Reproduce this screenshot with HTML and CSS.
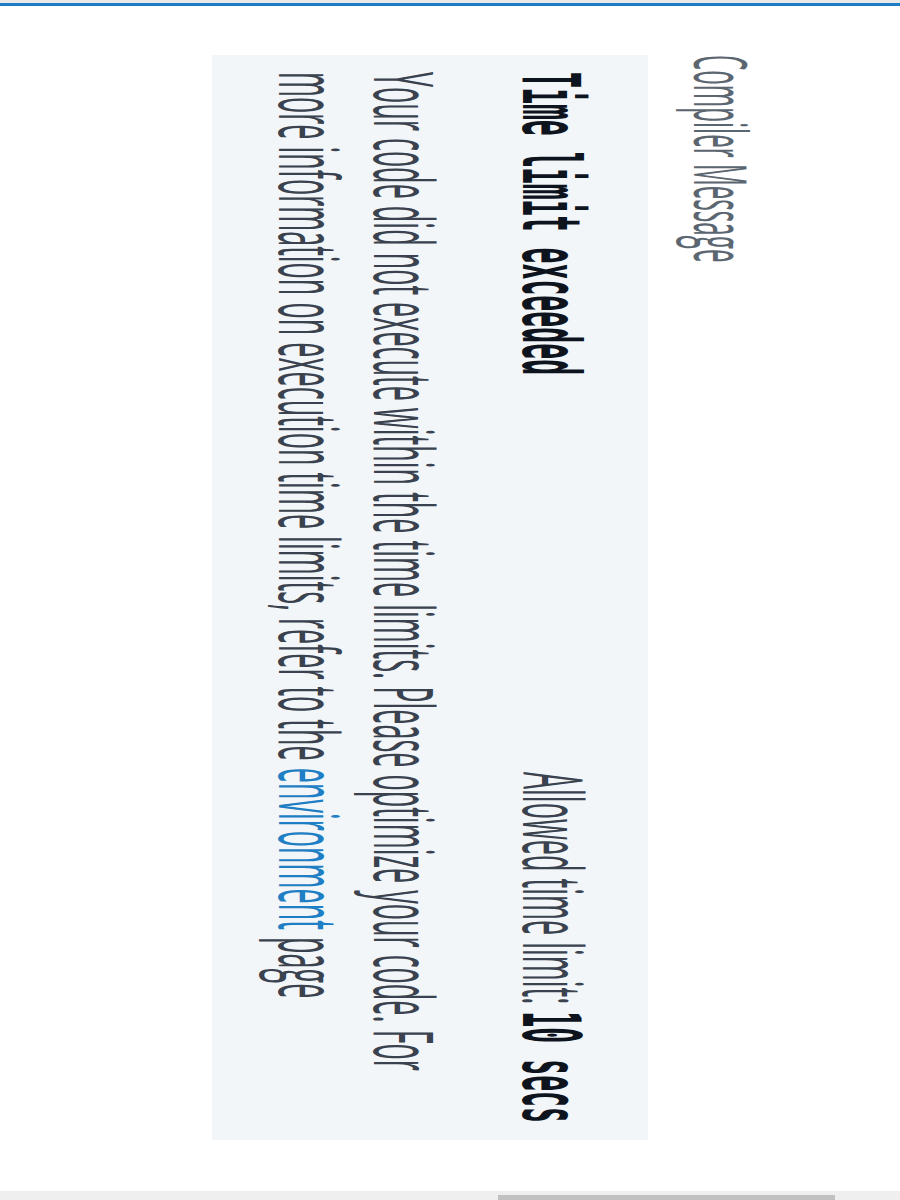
FILE: index.html
```html
<!DOCTYPE html>
<html lang="en">
<head>
<meta charset="utf-8">
<title>Compiler Message</title>
<link rel="stylesheet" href="styles.css">
</head>
<body>
<div class="topbar"></div>
<main class="stage">
  <section class="rot">
    <h2 class="title">Compiler Message</h2>
    <div class="panel">
      <div class="status-row">
        <span class="mono">Time limit exceeded</span>
        <span class="limit">Allowed time limit: <span class="mono">10 secs</span></span>
      </div>
      <p class="msg">Your code did not execute within the time limits. Please optimize your code. For more information on execution time limits, refer to the <a href="#">environment</a> page</p>
    </div>
  </section>
</main>
<div class="hbar"><div class="thumb"></div></div>
</body>
</html>
```
FILE: styles.css
```css
html, body {
  margin: 0;
  padding: 0;
  background: #ffffff;
}
body {
  width: 900px;
  height: 1200px;
  overflow: hidden;
}
.topbar {
  height: 3px;
  background: #e9e9e9;
  border-bottom: 3px solid #1b7bc4;
}
.stage {
  height: 1185px;
  overflow: hidden;
}
.rot {
  width: 1134px;
  box-sizing: border-box;
  padding-left: 49px;
  transform-origin: 0 0;
  transform: translateX(764px) rotate(90deg) scale(1, 3.05);
}
.title {
  margin: 0 0 10px;
  font-family: "Open Sans", sans-serif;
  font-weight: 400;
  font-size: 24.2px;
  line-height: 28px;
  color: #5b6670;
}
.panel {
  width: 1085px;
  box-sizing: border-box;
  background: #f3f6f8;
  padding: 13.5px 17px 17.1px 17px;
}
.status-row {
  display: flex;
  justify-content: space-between;
  align-items: baseline;
  line-height: 34px;
}
.mono {
  font-family: "DejaVu Sans Mono", monospace;
  font-weight: 700;
  font-size: 26.5px;
  color: #0e141e;
}
.limit {
  font-family: "Open Sans", sans-serif;
  font-size: 27px;
  color: #39424e;
}
.msg {
  margin: 15.4px 0 0;
  font-family: "Open Sans", sans-serif;
  font-size: 27px;
  line-height: 31px;
  color: #39424e;
}
.msg a {
  color: #1f7fc4;
  text-decoration: none;
}
.hbar {
  height: 9px;
  box-sizing: border-box;
  padding-top: 4px;
  background: #efefef;
}
.thumb {
  margin-left: 498px;
  width: 337px;
  height: 5px;
  background: #c1c1c1;
}
```
